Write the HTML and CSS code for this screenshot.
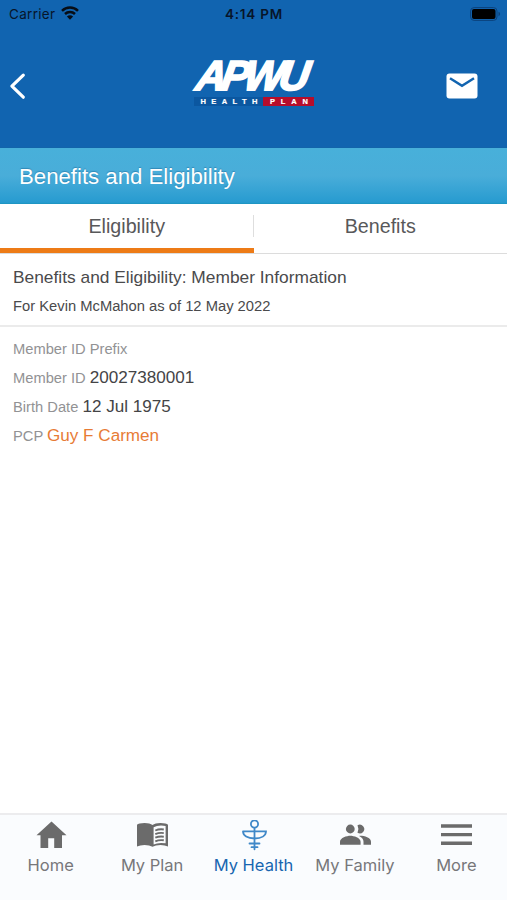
FILE: index.html
```html
<!DOCTYPE html>
<html lang="en">
<head>
<meta charset="utf-8">
<title>Benefits and Eligibility</title>
<link rel="stylesheet" href="styles.css">
</head>
<body>
<header class="header">
  <div class="status">
    <div class="carrier"><span>Carrier</span>
      <svg width="18" height="14" viewBox="0 0 18 14"><g fill="none" stroke="#070d16" stroke-width="2.5"><path d="M1 4.8a11.5 11.5 0 0 1 16 0"/><path d="M4 8a7.2 7.2 0 0 1 10 0"/></g><path d="M9 13.7 5.9 10.6a4.5 4.5 0 0 1 6.2 0z" fill="#070d16"/></svg>
    </div>
    <div class="clock">4:14 PM</div>
    <svg class="battery" width="31" height="14" viewBox="0 0 31 14"><rect x=".6" y=".6" width="26.4" height="12.8" rx="3.5" fill="none" stroke="#0c427b"/><rect x="2" y="2" width="23.5" height="10" rx="2" fill="#000"/><path d="M28.5 4.8v4.4q1.6-.6 1.6-2.2t-1.6-2.2" fill="#0c427b"/></svg>
  </div>
  <div class="toolbar">
    <svg class="back" width="17" height="28" viewBox="0 0 17 28"><path d="m14.3 3.2-11.4 11 11.4 11" fill="none" stroke="#fff" stroke-width="3.2" stroke-linecap="round" stroke-linejoin="round"/></svg>
    <svg class="logo" width="122" height="50" viewBox="0 0 122 50">
      <text class="logo-name" transform="translate(1.5 31.8) skewX(-9)" x="0" y="0" textLength="113" lengthAdjust="spacing">APWU</text>
      <path d="M1 39h69v9H1z" fill="#0b57a0"/><path d="M70 39h51v9H70z" fill="#b70d2b"/>
      <text class="logo-sub" x="7.5" y="46.2" textLength="57">HEALTH</text>
      <text class="logo-sub" x="77" y="46.2" textLength="38">PLAN</text>
    </svg>
    <svg class="mail" width="32" height="26" viewBox="0 0 32 26"><rect x=".5" y=".5" width="31" height="25" rx="3" fill="#fff"/><path d="m4 5.2 12 7.6 12-7.6" fill="none" stroke="#1164b0" stroke-width="2.5"/></svg>
  </div>
</header>
<h1 class="title">Benefits and Eligibility</h1>
<nav class="tabs">
  <div class="tab active">Eligibility</div>
  <div class="tab">Benefits</div>
</nav>
<section class="summary">
  <h2>Benefits and Eligibility: Member Information</h2>
  <p>For Kevin McMahon as of 12 May 2022</p>
</section>
<main class="details">
  <div class="row">Member ID Prefix</div>
  <div class="row">Member ID <span class="value">20027380001</span></div>
  <div class="row">Birth Date <span class="value">12 Jul 1975</span></div>
  <div class="row">PCP <span class="value link">Guy F Carmen</span></div>
</main>
<footer class="bottom">
  <div class="item"><svg width="34" height="32" viewBox="0 0 34 32"><path d="M17.500 1.500 2.500 15.300h4V28h7.700V18.200h6V28H28V15.300h4.500z" fill="#6b6b6b"/></svg><span>Home</span></div>
  <div class="item"><svg width="34" height="32" viewBox="0 0 34 32"><path d="M2 4.800Q3.500 3 9.500 3q5.500 0 8 2 2.500-2 8-2 6 0 7.500 1.800v21.800q-3-1.600-7.500-1.600-5 0-8 1.800-3-1.800-8-1.800-4.500 0-7.500 1.600z" fill="#6b6b6b"/><path d="M18.600 7.300q4.500-2.500 12-1.300v17.300q-7.500-1.200-12 1.300z" fill="#fafcfe"/><path d="M20.300 10.500q4-1.700 8.500-1M20.300 14.100q4-1.700 8.500-1M20.300 17.700q4-1.700 8.500-1M20.300 21.300q4-1.700 8.500-1" fill="none" stroke="#6b6b6b" stroke-width="1.900"/></svg><span>My Plan</span></div>
  <div class="item current"><svg width="34" height="32" viewBox="0 0 34 32"><g fill="none" stroke="#3f88c8" stroke-width="1.800" stroke-linecap="round"><circle cx="17.500" cy="4" r="3.600"/><path d="M17.500 7.800v21.500M6 11.300h23c0 4.500-4.500 7.200-11.500 7.200S6 15.800 6 11.300M12.500 23.500h10M14.500 27.200h6"/></g></svg><span>My Health</span></div>
  <div class="item"><svg width="34" height="32" viewBox="0 0 34 32"><g fill="#6b6b6b"><circle cx="12.300" cy="9" r="4.400"/><path d="M2 24.800v-3c0-4 6.900-6 10.300-6s10.300 2 10.300 6v3zM19.500 5.300a4.400 4.400 0 1 1 0 7.500q1.800-3.800 0-7.500M21.200 15.900c4.200-.3 11.800 1.500 11.800 5.900v3h-7.500v-3c0-2.600-1.500-4.500-4.300-5.900"/></g></svg><span>My Family</span></div>
  <div class="item"><svg width="34" height="32" viewBox="0 0 34 32"><path d="M2 4.300h31v3.400H2zm0 8.600h31v3.400H2zm0 8.600h31v3.400H2z" fill="#6b6b6b"/></svg><span>More</span></div>
</footer>
</body>
</html>
```
FILE: styles.css
```css
* { box-sizing: border-box; }
body {
  margin: 0;
  height: 900px;
  display: flex;
  flex-direction: column;
  overflow: hidden;
  background: #fff;
  color: #4a4a4c;
  font-family: "Liberation Sans", Arial, sans-serif;
}
svg { display: block; flex: none; }
h1, h2, p { margin: 0; font-weight: 400; }
.header { height: 148px; flex: none; background: #1164b0; border-bottom: 1px solid #1264aa; }
.status {
  height: 28px;
  display: grid;
  grid-template-columns: 1fr auto 1fr;
  align-items: center;
  padding: 0 6px 0 9px;
  color: #07152a;
  font: 13.5px/28px Inter, sans-serif;
}
.carrier { display: flex; align-items: center; gap: 6px; letter-spacing: .3px; }
.carrier svg { margin-top: -3px; }
.clock { margin-left: -2px; font-weight: 600; letter-spacing: .8px; }
.battery { justify-self: end; margin-top: -1px; }
.toolbar {
  height: 119px;
  display: grid;
  grid-template-columns: 1fr auto 1fr;
  align-items: start;
  padding: 30px 29px 0 9px;
}
.back { margin-top: 14px; }
.logo { margin-left: 20px; overflow: visible; }
.mail { justify-self: end; margin-top: 15px; }
.logo-name { font: italic 700 42px "Liberation Sans", Arial, sans-serif; fill: #fff; stroke: #fff; stroke-width: 1.800px; }
.logo-sub { font: 700 7.500px "Liberation Sans", Arial, sans-serif; fill: #fff; stroke: #fff; stroke-width: .2px; }
.title {
  height: 56px;
  flex: none;
  padding-left: 19px;
  background: linear-gradient(#48b0da, #49add9 50%, #279bd0 97%, #1b93bd);
  color: #fff;
  font-size: 22.200px;
  line-height: 58px;
  text-shadow: 0 -1px 1px rgba(0, 70, 120, .35);
}
.tabs { display: flex; height: 50px; flex: none; border-bottom: 1px solid #dcdcdc; }
.tab { position: relative; flex: 1; height: 49px; text-align: center; font-size: 19.700px; line-height: 45px; color: #58585a; }
.tab + .tab::before { content: ""; position: absolute; left: -1px; top: 11px; width: 1px; height: 22px; background: #dedede; }
.active { border-bottom: 5px solid #ed7b17; }
.summary { height: 73px; flex: none; padding: 8px 13px 0; border-bottom: 2px solid #ebebeb; }
.summary h2 { font-size: 17.350px; line-height: 30px; white-space: nowrap; }
.summary p { font-size: 14.750px; line-height: 29px; }
.details { flex: 1; padding: 8px 13px; color: #929294; font-size: 14.700px; }
.row { height: 29px; line-height: 28px; white-space: nowrap; }
.value { color: #444446; font-size: 17.100px; }
.link { color: #e77b35; }
.bottom { display: flex; height: 87px; flex: none; border-top: 2px solid #ececee; background: #fafcfe; }
.item { flex: 1; display: flex; flex-direction: column; align-items: center; padding-top: 5px; color: #77777a; font: 16.500px/20px Inter, sans-serif; white-space: nowrap; }
.item span { margin-top: 3px; }
.current { color: #1766b0; }
```
